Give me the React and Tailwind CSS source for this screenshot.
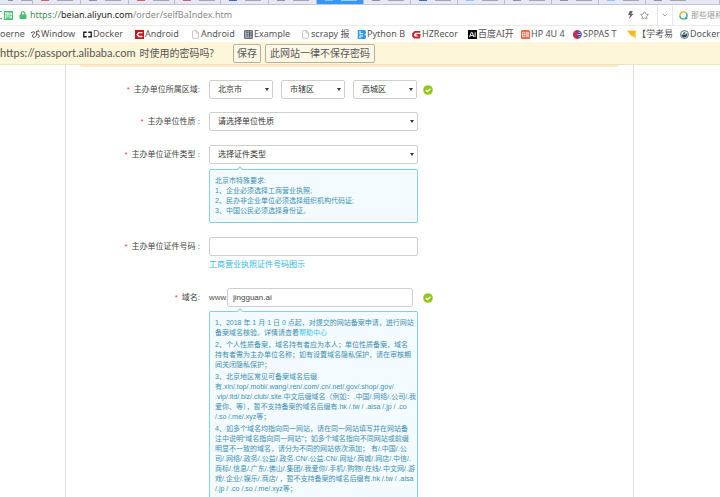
import { FaLock } from "react-icons/fa";
import { ChevronDown, File, Star } from "lucide-react";

const TABS = [
  { width: "w-[33px]", mark: "bg-[#8f949c]" },
  { width: "w-[48px]", mark: "bg-[#d2606a]" },
  { width: "w-[48px]", mark: "bg-[#8f949c]" },
  { width: "w-[46px]", mark: "bg-[#d2606a]" },
  { width: "w-[46px]", mark: "bg-[#d2606a]" },
  { width: "w-[48px]", mark: "bg-[#2f6fd0]" },
  { width: "w-[48px]", mark: "bg-[#8f949c]" },
  { width: "w-[47px]", mark: "bg-[#8cc4ff]", active: true },
  { width: "w-[47px]", mark: "bg-[#8f949c]" },
  { width: "w-[47px]", mark: "bg-[#2f6fd0]" },
  { width: "w-[47px]", mark: "bg-[#8cc4ff]" },
  { width: "w-[47px]", mark: "bg-[#8f949c]" },
  { width: "w-[47px]", mark: "bg-[#8f949c]" },
  { width: "w-[47px]", mark: "bg-[#8cc4ff]" },
  { width: "w-[74px]", mark: "bg-[#8f949c]" },
];

const WindowIcon = () => (
  <svg viewBox="0 0 12 12" className="size-full" fill="none" stroke="#444" strokeWidth="1.3">
    <path d="M0 3.500c2-1 5-1.500 5 0S2 6 2 8s2 2.500 4 1 2-5 1-7l3-1 1 2M7 6c2-1 4 0 4 2s-1 2-2 2" />
  </svg>
);

const BracketIcon = () => (
  <svg viewBox="0 0 12 12" className="size-full" fill="none" stroke="#222" strokeWidth="1.8">
    <path d="M5 3H1v6h4M7 3h4v6H7" />
  </svg>
);

const RedCIcon = () => (
  <svg viewBox="0 0 12 12" className="size-full">
    <rect width="12" height="12" fill="#d0121b" />
    <path d="M10 3.500H5L3 6l2 2.700h5" fill="none" stroke="#fff" strokeWidth="1.8" />
  </svg>
);

const FileIcon = () => <File className="size-full text-[#999]" strokeWidth={1.5} />;

const ExampleIcon = () => (
  <svg viewBox="0 0 12 12" className="size-full">
    <rect x="1" y="1" width="10" height="10" fill="#b9c8cf" stroke="#333f45" strokeWidth="1.2" />
    <path d="M3 3h3M3 5.500h3M3 8h3M7.500 2v8M8.500 4h2M8.500 7h2" stroke="#333f45" strokeWidth="1.2" />
  </svg>
);

const PythonIcon = () => (
  <svg viewBox="0 0 12 12" className="size-full">
    <path d="M1 0h7a3 3 0 0 1 2 6 3 3 0 0 1-2 6H1z" fill="#2d9bf0" />
    <path d="M4 1v4h4M4 11V8h4" fill="none" stroke="#fff" strokeWidth="1.4" />
  </svg>
);

const GIcon = () => (
  <svg viewBox="0 0 12 12" className="size-full" fill="none" stroke="#d22128" strokeWidth="2.6">
    <path d="M11 2.500H4L1.500 5v3l2 2h6L10 6.500H6" />
  </svg>
);

const AiIcon = () => (
  <svg viewBox="0 0 12 12" className="size-full">
    <rect width="12" height="12" fill="#050505" />
    <path d="M2 9.500 4.500 3h1L8 9.500M3 7.500h4M9.500 3v6.500" fill="none" stroke="#fff" strokeWidth="1.3" />
  </svg>
);

const HpIcon = () => (
  <svg viewBox="0 0 12 12" className="size-full" fill="none" stroke="#fff">
    <rect width="12" height="12" rx="2" fill="#f0603c" stroke="none" />
    <path d="M2 3h3v6H2zM2 6h3M7 3h3v6H7zM8.500 4v4" strokeWidth=".9" />
  </svg>
);

const SppasIcon = () => (
  <svg viewBox="0 0 12 12" className="size-full">
    <circle cx="6" cy="6" r="5.800" fill="#2745a7" />
    <path d="M6 .2A5.800 5.800 0 0 0 6 11.800z" fill="#cf2553" />
    <path d="M5 6h6M7 3h3M7 9h3" stroke="#fff" strokeWidth="1" />
    <path d="M3 3l5 6" stroke="#e33" strokeWidth="1.5" />
  </svg>
);

const FlagIcon = () => (
  <svg viewBox="0 0 12 12" className="size-full">
    <path d="M0 1h12l-1 5 1 1-6 1z" fill="#f5b81c" />
    <path d="M6 8l6 3V6z" fill="#fbcf4a" />
  </svg>
);

const WhaleIcon = () => (
  <svg viewBox="0 0 12 12" className="size-full">
    <circle cx="6" cy="6" r="5.300" fill="#fff" stroke="#27435a" strokeWidth="1" />
    <path d="M2 6h6l1-2 1 2c-1 3-2 4-4 4S2 9 2 6z" fill="#27435a" />
    <path d="M4 4.500h3M5 3h2" stroke="#27435a" strokeWidth="1.2" />
  </svg>
);

const BOOKMARKS = [
  { label: "oerne", width: "w-[31px]" },
  { label: "Window", width: "w-[52px]", Icon: WindowIcon },
  { label: "Docker", width: "w-[52px]", Icon: BracketIcon },
  { label: "Android", width: "w-[56px]", Icon: RedCIcon },
  { label: "Android", width: "w-[53px]", Icon: FileIcon },
  { label: "Example", width: "w-[57px]", Icon: ExampleIcon },
  { label: "scrapy 报", width: "w-[56px]", Icon: FileIcon },
  { label: "Python B", width: "w-[55px]", Icon: PythonIcon },
  { label: "HZRecor", width: "w-[56px]", Icon: GIcon },
  { label: "百度AI开", width: "w-[53px]", Icon: AiIcon },
  { label: "HP 4U 4", width: "w-[52px]", Icon: HpIcon },
  { label: "SPPAS T", width: "w-[54px]", Icon: SppasIcon },
  { label: "【学考易", width: "w-[53px]", Icon: FlagIcon },
  { label: "Docker", width: "w-[60px]", Icon: WhaleIcon },
];

const ID_NOTES = [
  ["北京市特殊要求:"],
  ["1、企业必须选择工商营业执照;"],
  ["2、民办非企业单位必须选择组织机构代码证;"],
  ["3、中国公民必须选择身份证。"],
];

const DOMAIN_NOTES = [
  [
    "1、2018 年 1 月 1 日 0 点起，对提交的网站备案申请，进行网站",
    <>
      备案域名核验。详情请查看
      <a href="#help" className="text-[#35c3e6]">帮助中心</a>
    </>,
  ],
  [
    "2、个人性质备案，域名持有者应为本人；单位性质备案，域名",
    "持有者需为主办单位名称；如有设置域名隐私保护，请在审核期",
    "间关闭隐私保护；",
  ],
  [
    "3、北京地区常见可备案域名后缀",
    "有.xin/.top/.mobi/.wang/.ren/.com/.cn/.net/.gov/.shop/.gov/",
    ".vip/.ltd/.biz/.club/.site.中文后缀域名（例如：.中国/.网络/.公司/.我",
    "爱你、等），暂不支持备案的域名后缀有.hk /.tw / .aisa /.jp / .co",
    "/.so /.me/.xyz等；",
  ],
  [
    "4、如多个域名均指向同一网站，请在同一网站填写并在网站备",
    "注中说明“域名指向同一网站”；如多个域名指向不同网站或前缀",
    "明显不一致的域名，请分为不同的网站依次添加； 有/.中国/.公",
    "司/.网络/.政务/.公益/.政务.CN/.公益.CN/.网址/.商城/.网店/.中信/.",
    "商标/.信息/.广东/.佛山/.集团/.我爱你/.手机/.购物/.在线/.中文网/.游",
    "戏/.企业/.娱乐/.商店/ ，暂不支持备案的域名后缀有.hk /.tw / .aisa",
    "/.jp / .co /.so /.me/.xyz等；",
  ],
];

const Tip = ({ notes, className }) => (
  <div
    className={`relative flex w-[209px] flex-col rounded-[2px] border border-[#83d0e2] bg-[#f4fbfe] px-[5px] text-[7px] leading-[10px] whitespace-nowrap text-[#3c8fb0] ${className}`}
  >
    <span className="absolute -top-[3px] left-7 size-1 rotate-45 border-t border-l border-[#83d0e2] bg-[#f4fbfe]" />
    {notes.map((lines, i) => (
      <p key={i}>
        {lines.map((line, j) => (
          <span key={j} className="block">{line}</span>
        ))}
      </p>
    ))}
  </div>
);

const Check = () => (
  <svg viewBox="0 0 10 10" className="size-[10px] shrink-0">
    <circle cx="5" cy="5" r="4.800" fill="#93c61c" />
    <path d="M2.700 5l1.700 1.700L7.500 3.700" fill="none" stroke="#fff" strokeWidth="1.3" />
  </svg>
);

const Select = ({ id, label, value, className }) => (
  <div className={`relative ${className}`}>
    <select
      id={id}
      aria-label={label}
      className="block h-[19px] w-full appearance-none rounded-[2px] border border-[#cfcfcf] bg-white px-2 text-[8px] text-[#333]"
    >
      <option>{value}</option>
    </select>
    <span className="pointer-events-none absolute top-2 right-1 border-x-2 border-t-[3px] border-x-transparent border-t-[#333]" />
  </div>
);

const Row = ({ id, label, className = "", children }) => (
  <div className={`flex items-start ${className}`}>
    <label htmlFor={id} className="w-[134px] shrink-0 text-right text-[8px] leading-[19px] text-[#444]">
      <span className="mr-1 text-[#f04848]">*</span>
      {label}
    </label>
    <div className="ml-[9px]">{children}</div>
  </div>
);

const App = () => {
  return (
    <div className="h-screen overflow-hidden bg-white font-['Liberation_Sans','Noto_Sans_CJK_SC',sans-serif]">
      {/* tab strip */}
      <div className="flex h-[5px] overflow-hidden border-b border-[#c2c6d6] bg-[#e6e8f4]">
        {TABS.map((tab, i) => (
          <div
            key={i}
            className={`flex shrink-0 gap-2 border-r border-[#b9bdcd] pl-2 ${tab.width} ${tab.active ? "bg-[#3399f5]" : ""}`}
          >
            <span className={`h-px w-2 ${tab.mark}`} />
            <span className={`h-px w-4 ${tab.active ? "bg-[#9fd0ff]" : "bg-[#a3a6b0]"}`} />
          </div>
        ))}
      </div>

      {/* address bar */}
      <div className="flex h-[21px] items-center border-b border-[#ececec] font-['Noto_Sans','Noto_Sans_CJK_SC',sans-serif] whitespace-nowrap">
        <span className="h-2 w-[2px] border-y border-[#3dc368]" />
        <span className="ml-[2px] flex size-[9px] items-center justify-center border border-[#3dc368] bg-[#e7f9ec] text-[7px] leading-none text-[#1fb14f]">
          证
        </span>
        <FaLock className="ml-[6px] size-[8px] text-[#46c06e]" />
        <p className="ml-[3px] text-[9px] text-[#8a8a8a]">
          <span className="text-[#3f8f5c]">https://</span>
          <span className="text-[#222]">beian.aliyun.com</span>/order/selfBaIndex.htm
        </p>
        <div className="ml-auto flex h-full items-center">
          <svg viewBox="0 0 8 10" className="h-2 w-[7px]" fill="#666">
            <path d="M3 0h4L5 3.500h3L2 10l1.500-5H1z" />
          </svg>
          <Star className="ml-[6px] size-[9px] text-[#777]" />
          <span className="ml-2 flex h-full w-4 items-center justify-center border-x border-[#e8e8e8]">
            <ChevronDown className="size-2 text-[#777]" />
          </span>
          <svg viewBox="0 0 10 10" className="ml-[6px] size-[9px]" fill="none" strokeWidth="1.6">
            <path d="M1 5a4 4 0 0 1 7-2.600" stroke="#f0a71f" />
            <path d="M8 2.400A4 4 0 0 1 5 9" stroke="#35a8e0" />
            <path d="M5 9a4 4 0 0 1-4-4M7 7l2 2" stroke="#2fae4c" />
          </svg>
          <span className="ml-[3px] w-[29px] text-[8px] text-[#999]">那些堪称</span>
        </div>
      </div>

      {/* bookmarks */}
      <nav className="flex h-[16px] items-center overflow-hidden font-['Noto_Sans','Noto_Sans_CJK_SC',sans-serif] text-[9px] whitespace-nowrap text-[#555]">
        {BOOKMARKS.map(({ label, width, Icon }, i) => (
          <a key={i} href="#bookmark" className={`flex shrink-0 items-center gap-px ${width}`}>
            {Icon && (
              <span className="size-[9px] shrink-0">
                <Icon />
              </span>
            )}
            {label}
          </a>
        ))}
      </nav>

      {/* password prompt */}
      <div className="flex h-[23px] items-center border-b border-[#f0e3b5] bg-[#fef6d9] font-['Noto_Sans','Noto_Sans_CJK_SC',sans-serif] text-[10px] whitespace-nowrap text-[#555]">
        <p className="flex w-[233px] items-baseline gap-1">
          <span className="font-['Lato',sans-serif] text-[11px]">https://passport.alibaba.com</span>
          <span>时使用的密码吗?</span>
        </p>
        <button className="h-[19px] w-7 rounded-[2px] border border-[#b5b09c] bg-[#fdf8e6]">保存</button>
        <button className="ml-1 h-[19px] w-[110px] rounded-[2px] border border-[#b5b09c] bg-[#fdf8e6]">
          此网站一律不保存密码
        </button>
      </div>

      <main className="mr-[86px] ml-[65px] border-x border-[#dedede]">
        <div className="mx-[14px] h-[2px] rounded-b bg-[#fce9cb]" />
        <form className="pt-[13px]">
          <Row id="province" label="主办单位所属区域:">
            <div className="flex items-center">
              <div className="flex gap-2">
                <Select id="province" value="北京市" className="w-16" />
                <Select id="city" label="市" value="市辖区" className="w-16" />
                <Select id="district" label="区" value="西城区" className="w-16" />
              </div>
              <span className="ml-[6px]">
                <Check />
              </span>
            </div>
          </Row>
          <Row id="unit-type" label="主办单位性质 :" className="mt-[13px]">
            <Select id="unit-type" value="请选择单位性质" className="w-[209px]" />
          </Row>
          <Row id="id-type" label="主办单位证件类型 :" className="mt-[14px]">
            <Select id="id-type" value="选择证件类型" className="w-[209px]" />
            <Tip notes={ID_NOTES} className="mt-[5px] pt-[6px] pb-[6px]" />
          </Row>
          <Row id="id-number" label="主办单位证件号码 :" className="mt-[14px]">
            <input
              id="id-number"
              type="text"
              className="block h-[19px] w-[209px] rounded-[2px] border border-[#cfcfcf] px-[6px] text-[8px]"
            />
            <a href="#sample" className="mt-[3px] block text-[8px] leading-[12px] text-[#2fb9dc]">
              工商营业执照证件号码图示
            </a>
          </Row>
          <Row id="domain" label="域名:" className="mt-[17px]">
            <div className="flex items-center">
              <span className="w-[18px] text-[8px] text-[#555]">www.</span>
              <input
                id="domain"
                type="text"
                defaultValue="jingguan.ai"
                className="block h-[19px] w-[186px] rounded-[2px] border border-[#cfcfcf] px-[5px] text-[8px] text-[#444]"
              />
              <span className="ml-[10px]">
                <Check />
              </span>
            </div>
            <Tip notes={DOMAIN_NOTES} className="mt-1 gap-[2px] pt-[6px] pb-4" />
          </Row>
        </form>
      </main>
    </div>
  );
};

export default App;
